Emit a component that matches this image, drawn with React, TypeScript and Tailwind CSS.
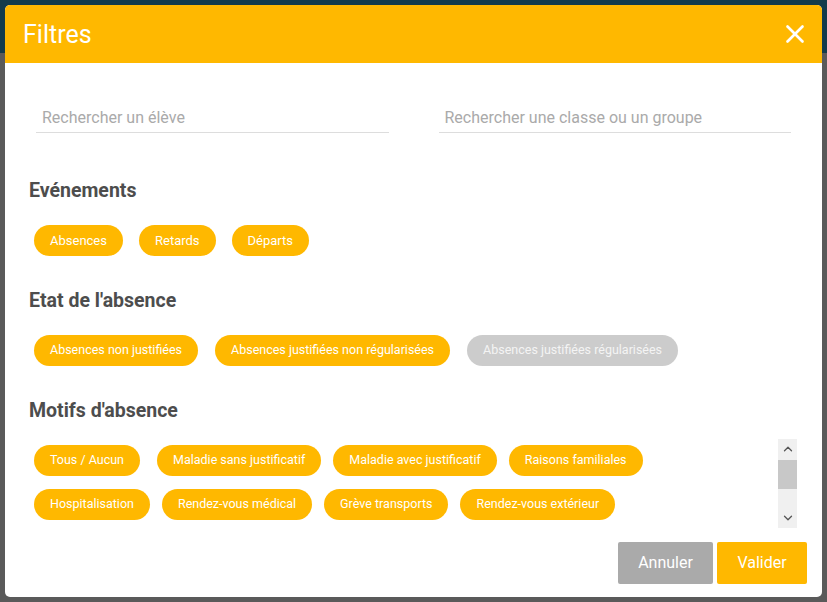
import { X, ChevronUp, ChevronDown } from 'lucide-react';

const EVENTS = ['Absences', 'Retards', 'Départs'];

const STATES = [
  { label: 'Absences non justifiées', active: true },
  { label: 'Absences justifiées non régularisées', active: true },
  { label: 'Absences justifiées régularisées', active: false },
];

const REASONS = [
  'Tous / Aucun',
  'Maladie sans justificatif',
  'Maladie avec justificatif',
  'Raisons familiales',
  'Hospitalisation',
  'Rendez-vous médical',
  'Grève transports',
  'Rendez-vous extérieur',
];

function Chip({ label, active = true, large = false, className = '' }: { label: string; active?: boolean; large?: boolean; className?: string }) {
  return (
    <button
      className={
        'h-[31px] px-4 rounded-full leading-none whitespace-nowrap ' +
        (large ? 'text-[13px] ' : 'text-[12.5px] ') +
        (active ? 'bg-[#ffb800] text-white ' : 'bg-[#cccccc] text-[#f4f4f4] ') +
        className
      }
    >
      {label}
    </button>
  );
}

function SectionTitle({ children }: { children: string }) {
  return <h3 className="pl-6 text-[19.5px] leading-6 font-bold text-[#4d4d4d]">{children}</h3>;
}

export default function App() {
  return (
    <div className="relative w-[827px] h-[602px] overflow-hidden font-['Roboto',sans-serif]">
      {/* page behind the overlay */}
      <div className="h-[53px] bg-[#133b4b]" />
      <div className="h-[549px] bg-[#5a5a5a]" />

      {/* modal */}
      <div className="absolute left-[5px] top-[5px] w-[817px] h-[592px] bg-white rounded-[5px] flex flex-col">
        <div className="h-[58px] shrink-0 bg-[#ffb800] rounded-t-[5px] flex items-center justify-between pl-[18px] pr-[12px]">
          <h2 className="text-[25px] text-white leading-none mt-[1px]">Filtres</h2>
          <X className="w-[30px] h-[30px] text-white" strokeWidth={2.1} />
        </div>

        <div className="grid grid-cols-2 gap-[50px] px-[31px] pt-[40px]">
          <input
            placeholder="Rechercher un élève"
            className="h-[30px] border-b border-[#dddddd] px-[6px] text-[16px] text-[#555] placeholder:text-[#aaaaaa] outline-none"
          />
          <input
            placeholder="Rechercher une classe ou un groupe"
            className="h-[30px] border-b border-[#dddddd] px-[6px] text-[16px] text-[#555] placeholder:text-[#aaaaaa] outline-none"
          />
        </div>

        <div className="mt-[46px]">
          <SectionTitle>Evénements</SectionTitle>
          <div className="flex gap-4 pl-[29px] mt-[22px]">
            {EVENTS.map((e) => (
              <Chip key={e} label={e} large />
            ))}
          </div>
        </div>

        <div className="mt-[33px]">
          <SectionTitle>Etat de l'absence</SectionTitle>
          <div className="flex gap-[17px] pl-[29px] mt-[22px]">
            {STATES.map((s) => (
              <Chip key={s.label} label={s.label} active={s.active} />
            ))}
          </div>
        </div>

        <div className="mt-[33px]">
          <SectionTitle>Motifs d'absence</SectionTitle>
          <div className="flex mt-[16px] pl-[29px] pr-[25px] h-[89px]">
            <div className="flex-1 mr-[10px] flex flex-wrap content-start gap-x-3 gap-y-[13px] pt-[6px] overflow-hidden">
              {REASONS.map((r, i) => (
                <Chip key={r} label={r} className={i === 0 ? 'mr-[5px]' : ''} />
              ))}
            </div>
            {/* scrollbar */}
            <div className="w-[19px] bg-[#f0f0f0] flex flex-col items-center">
              <ChevronUp className="w-[14px] h-[14px] mt-[3px] text-[#555]" strokeWidth={2.2} />
              <div className="w-full h-[29px] mt-[4px] bg-[#c8c8c8]" />
              <div className="flex-1" />
              <ChevronDown className="w-[14px] h-[14px] mb-[3px] text-[#555]" strokeWidth={2.2} />
            </div>
          </div>
        </div>

        <div className="flex justify-end gap-1 pr-[15px] mt-[14px]">
          <button className="w-[95px] h-[42px] rounded-[2px] bg-[#aaaaaa] text-white text-[16px]">Annuler</button>
          <button className="w-[90px] h-[42px] rounded-[2px] bg-[#ffb800] text-white text-[16px]">Valider</button>
        </div>
      </div>
    </div>
  );
}
